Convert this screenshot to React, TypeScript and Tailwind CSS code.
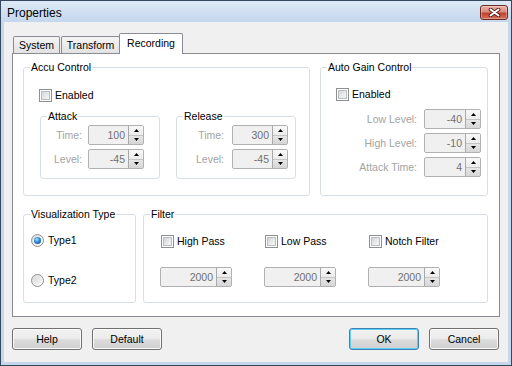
import React from "react";

function Check() {
  return (
    <span className="w-[13px] h-[13px] border border-[#8e8f8f] bg-white p-[1px] flex shrink-0">
      <span className="flex-1 border border-[#b9bdc2] bg-gradient-to-br from-[#d3d6da] to-[#f8f8f8]" />
    </span>
  );
}

function Radio({ checked }: { checked?: boolean }) {
  return (
    <span className="w-[13px] h-[13px] rounded-full border border-[#8e8f8f] bg-gradient-to-br from-[#dcdcdc] to-white flex items-center justify-center shrink-0">
      {checked ? (
        <span className="w-[7px] h-[7px] rounded-full bg-[radial-gradient(circle_at_40%_35%,#a8e4ff_0%,#2a86d6_45%,#134f8f_100%)]" />
      ) : (
        <span className="w-[7px] h-[7px] rounded-full bg-gradient-to-br from-[#d6d8da] to-[#f6f6f6]" />
      )}
    </span>
  );
}

function Spin({ value, className }: { value: string; className: string }) {
  return (
    <div className={`flex h-[20px] border border-[#b1b1b1] rounded-[2px] bg-[#f0f0f0] ${className}`}>
      <div className="flex-1 flex items-center justify-end pr-[3px] text-[#707070]">{value}</div>
      <div className="w-[15px] flex flex-col border-l border-[#a9a9a9]">
        <div className="flex-1 flex items-center justify-center bg-gradient-to-b from-[#f8f8f8] to-[#ececec] border-b border-[#c4c4c4]">
          <svg width="5" height="3" viewBox="0 0 5 3">
            <polygon points="0,3 5,3 2.5,0" fill="#000" />
          </svg>
        </div>
        <div className="flex-1 flex items-center justify-center bg-gradient-to-b from-[#e6e6e6] to-[#d6d6d6]">
          <svg width="5" height="3" viewBox="0 0 5 3">
            <polygon points="0,0 5,0 2.5,3" fill="#000" />
          </svg>
        </div>
      </div>
    </div>
  );
}

function Group({
  title,
  className,
  children,
}: {
  title: string;
  className: string;
  children?: React.ReactNode;
}) {
  return (
    <fieldset className={`border border-[#d5dfe5] rounded-[3px] min-w-0 ${className}`}>
      <legend className="ml-[6px] px-[1px] leading-[13px]">{title}</legend>
      {children}
    </fieldset>
  );
}

function Btn({ label, primary }: { label: string; primary?: boolean }) {
  return (
    <div
      className={`w-[70px] h-[22px] rounded-[3px] border flex items-center justify-center bg-[linear-gradient(to_bottom,#f2f2f2_0%,#ebebeb_48%,#dddddd_52%,#cfcfcf_100%)] ${
        primary
          ? "border-[#3c7fb1] shadow-[inset_0_0_0_1px_#5fd0f5]"
          : "border-[#707070] shadow-[inset_0_0_0_1px_#fbfbfb]"
      }`}
    >
      {label}
    </div>
  );
}

export default function App() {
  return (
    <div className="w-[512px] h-[366px] flex flex-col border border-[#34475c] bg-[#c4d7ed] font-['Liberation_Sans',Arial,sans-serif] text-[10.5px] leading-[13px] text-black select-none">
      {/* Title bar */}
      <div className="h-[21px] flex items-start justify-between bg-gradient-to-b from-[#dde9f6] to-[#c4d7ed]">
        <div className="pl-[6px] pt-[5px] text-[12px] leading-[15px] text-black">Properties</div>
        <div className="mt-[4px] mr-[3px] w-[28px] h-[15px] rounded-[3px] border border-[#6b2a23] bg-[linear-gradient(to_bottom,#eab0a5_0%,#d98a7b_45%,#c2432f_55%,#d36f58_100%)] flex items-center justify-center shadow-[inset_0_0_0_1px_rgba(255,255,255,0.3)]">
          <svg width="13" height="9" viewBox="0 0 13 9">
            <path d="M2.5 1.5 L10.5 7.5 M10.5 1.5 L2.5 7.5" stroke="#4a1a16" strokeWidth="3.6" strokeLinecap="round" />
            <path d="M2.5 1.5 L10.5 7.5 M10.5 1.5 L2.5 7.5" stroke="#ffffff" strokeWidth="2" strokeLinecap="round" />
          </svg>
        </div>
      </div>

      {/* Client */}
      <div className="flex-1 mx-[3px] mb-[3px] bg-[#f0f0f0] flex flex-col pl-[8px] pt-[11px]">
        {/* Tabs */}
        <div className="h-[20px] flex items-end pl-[1px]">
          <div className="w-[47px] h-[17px] border-t border-l border-r border-[#898c95] rounded-t-[2px] bg-gradient-to-b from-[#f4f4f4] to-[#e2e2e2] flex items-center justify-center">
            System
          </div>
          <div className="ml-[1px] w-[59px] h-[17px] border-t border-l border-r border-[#898c95] rounded-t-[2px] bg-gradient-to-b from-[#f4f4f4] to-[#e2e2e2] flex items-center justify-center">
            Transform
          </div>
          <div className="-ml-[1px] -mb-px relative z-10 w-[64px] h-[21px] border-t border-l border-r border-[#898c95] rounded-t-[2px] bg-white flex justify-center pt-[3px]">
            Recording
          </div>
        </div>

        {/* Panel */}
        <div className="w-[488px] h-[264px] border border-[#898c95] bg-white flex flex-col pt-[7px] pl-[10px]">
          {/* Row 1 */}
          <div className="flex gap-[10px]">
            <Group title="Accu Control" className="w-[287px] h-[135px]">
              <div className="pl-[15px] pt-[15px] flex items-center">
                <Check />
                <span className="ml-[3px]">Enabled</span>
              </div>
              <div className="flex gap-[16px] mt-[8px] pl-[16px]">
                <Group title="Attack" className="w-[120px] h-[69px]">
                  <div className="grid grid-cols-[41px_56px] gap-x-[6px] gap-y-[4px] pt-[2px] items-center">
                    <span className="text-right text-[#a3a3a3]">Time:</span>
                    <Spin value="100" className="w-[56px]" />
                    <span className="text-right text-[#a3a3a3]">Level:</span>
                    <Spin value="-45" className="w-[56px]" />
                  </div>
                </Group>
                <Group title="Release" className="w-[120px] h-[69px]">
                  <div className="grid grid-cols-[47px_56px] gap-x-[8px] gap-y-[4px] pt-[2px] items-center">
                    <span className="text-right text-[#a3a3a3]">Time:</span>
                    <Spin value="300" className="w-[56px]" />
                    <span className="text-right text-[#a3a3a3]">Level:</span>
                    <Spin value="-45" className="w-[56px]" />
                  </div>
                </Group>
              </div>
            </Group>
            <Group title="Auto Gain Control" className="w-[168px] h-[135px]">
              <div className="pl-[15px] pt-[14px] flex items-center">
                <Check />
                <span className="ml-[3px]">Enabled</span>
              </div>
              <div className="grid grid-cols-[96px_57px] gap-x-[7px] gap-y-[4px] mt-[8px] items-center">
                <span className="text-right text-[#a3a3a3]">Low Level:</span>
                <Spin value="-40" className="w-[57px]" />
                <span className="text-right text-[#a3a3a3]">High Level:</span>
                <Spin value="-10" className="w-[57px]" />
                <span className="text-right text-[#a3a3a3]">Attack Time:</span>
                <Spin value="4" className="w-[57px]" />
              </div>
            </Group>
          </div>

          {/* Row 2 */}
          <div className="flex gap-[7px] mt-[12px]">
            <Group title="Visualization Type" className="w-[113px] h-[95px]">
              <div className="pl-[7px] pt-[13px] flex flex-col gap-[27px]">
                <div className="flex items-center">
                  <Radio checked />
                  <span className="ml-[4px]">Type1</span>
                </div>
                <div className="flex items-center">
                  <Radio />
                  <span className="ml-[4px]">Type2</span>
                </div>
              </div>
            </Group>
            <Group title="Filter" className="w-[345px] h-[95px]">
              <div className="pl-[16px] pt-[14px] flex">
                {["High Pass", "Low Pass", "Notch Filter"].map((name) => (
                  <div key={name} className="w-[104px] flex flex-col">
                    <div className="flex items-center pl-[1px]">
                      <Check />
                      <span className="ml-[3px]">{name}</span>
                    </div>
                    <Spin value="2000" className="w-[72px] mt-[19px]" />
                  </div>
                ))}
              </div>
            </Group>
          </div>
        </div>

        {/* Buttons */}
        <div className="flex mt-[11px] pr-[9px]">
          <Btn label="Help" />
          <div className="ml-[10px]">
            <Btn label="Default" />
          </div>
          <div className="ml-auto">
            <Btn label="OK" primary />
          </div>
          <div className="ml-[10px]">
            <Btn label="Cancel" />
          </div>
        </div>
      </div>
    </div>
  );
}
